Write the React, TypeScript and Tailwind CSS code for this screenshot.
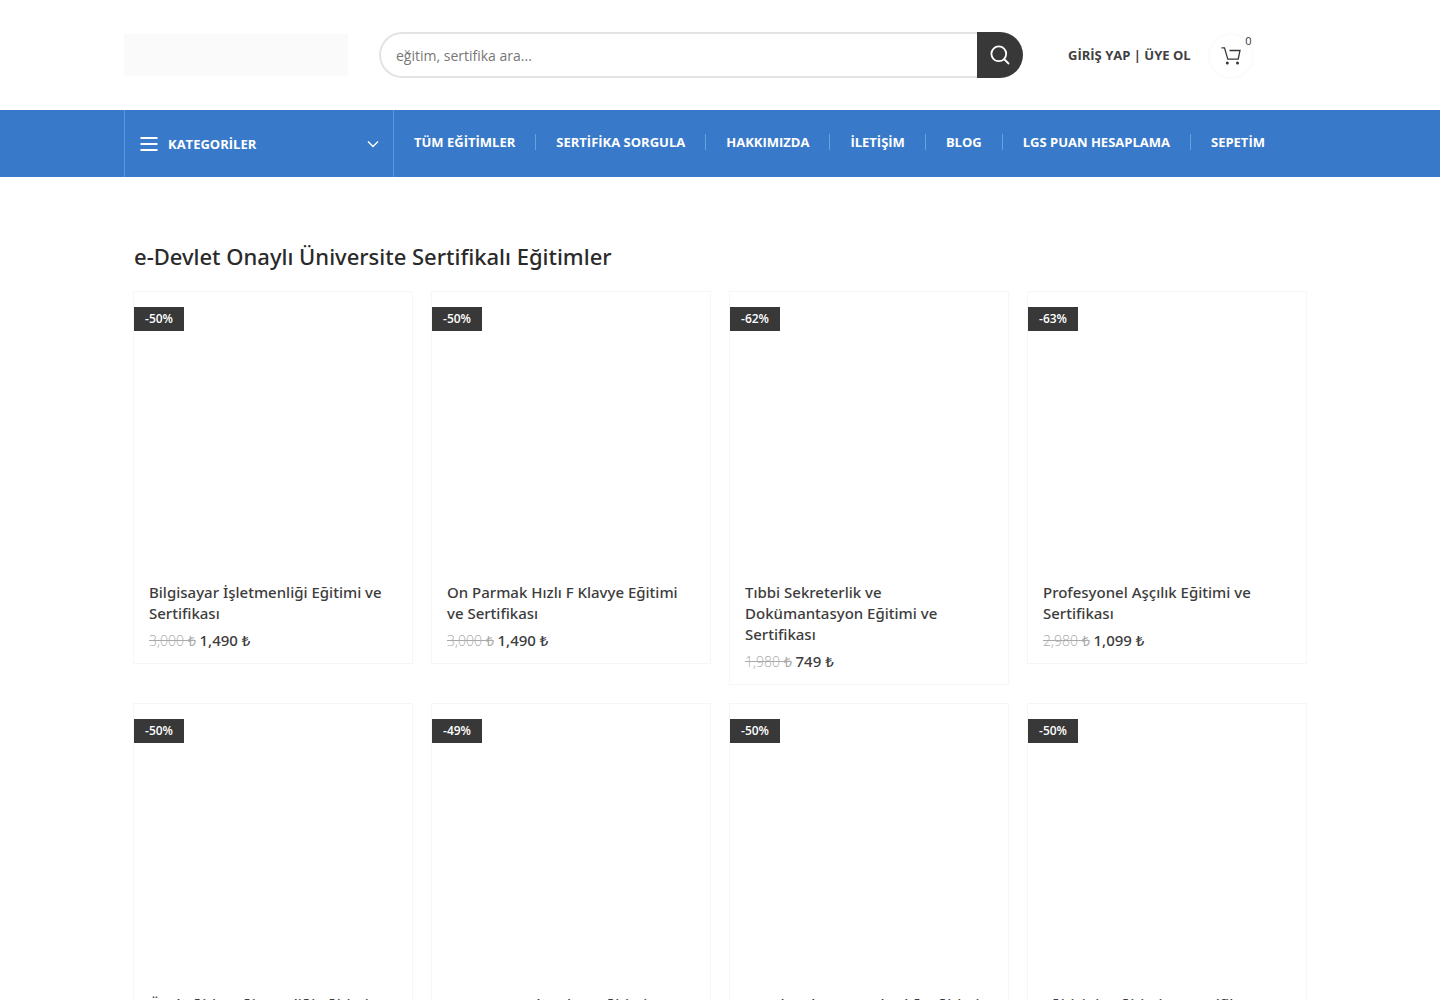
interface Product {
    title: string;
    discount: string;
    oldPrice: string;
    price: string;
}

const navItems = [
    "TÜM EĞİTİMLER",
    "SERTİFİKA SORGULA",
    "HAKKIMIZDA",
    "İLETİŞİM",
    "BLOG",
    "LGS PUAN HESAPLAMA",
    "SEPETİM",
];

const products: Product[] = [
    { title: "Bilgisayar İşletmenliği Eğitimi ve Sertifikası", discount: "-50%", oldPrice: "3,000", price: "1,490" },
    { title: "On Parmak Hızlı F Klavye Eğitimi ve Sertifikası", discount: "-50%", oldPrice: "3,000", price: "1,490" },
    { title: "Tıbbi Sekreterlik ve Dokümantasyon Eğitimi ve Sertifikası", discount: "-62%", oldPrice: "1,980", price: "749" },
    { title: "Profesyonel Aşçılık Eğitimi ve Sertifikası", discount: "-63%", oldPrice: "2,980", price: "1,099" },
    { title: "Özel Eğitim Eğitmenliği Eğitimi ve Sertifikası", discount: "-50%", oldPrice: "3,000", price: "1,490" },
    { title: "Hasta ve Yaşlı Bakım Eğitimi ve Sertifikası", discount: "-49%", oldPrice: "2,950", price: "1,490" },
    { title: "Çocuk Bakım ve Bakıcılığı Eğitimi ve Sertifikası", discount: "-50%", oldPrice: "3,000", price: "1,490" },
    { title: "Eğiticinin Eğitimi ve Sertifikası", discount: "-50%", oldPrice: "3,000", price: "1,490" },
];

function MenuIcon() {
    return (
        <svg width="18" height="14" viewBox="0 0 18 14" fill="none" stroke="currentColor" strokeWidth="1.8" aria-hidden="true">
            <path d="M.5 1h17M.5 7h17M.5 13h17" />
        </svg>
    );
}

function SearchIcon() {
    return (
        <svg width="20" height="20" viewBox="0 0 20 20" fill="none" stroke="currentColor" strokeWidth="1.8" aria-hidden="true">
            <circle cx="8.8" cy="8.8" r="7.4" />
            <path d="M14 14l5 5" />
        </svg>
    );
}

function CartIcon() {
    return (
        <svg width="20" height="20" viewBox="0 0 20 20" fill="none" stroke="currentColor" strokeWidth="1.3" aria-hidden="true">
            <path d="M.5 1.8h3l3.3 11.4h10.4L19 4.5H8.5" />
            <circle cx="6.3" cy="17" r="1.5" fill="currentColor" stroke="none" />
            <circle cx="16.5" cy="17" r="1.5" fill="currentColor" stroke="none" />
        </svg>
    );
}

function Header() {
    return (
        <header>
            <div className="mx-auto flex h-[110px] max-w-[1192px] items-center">
                <a href="#" aria-label="Ana sayfa" className="h-[42px] w-56 shrink-0 bg-[#fafafa]" />
                <form className="ml-[31px] flex h-[46px] max-w-[644px] flex-1" onSubmit={(e) => e.preventDefault()}>
                    <input
                        type="search"
                        aria-label="Ara"
                        placeholder="eğitim, sertifika ara..."
                        className="min-w-0 flex-1 rounded-l-full border-2 border-r-0 border-[#e3e3e3] pl-[15px] pt-0.5 text-sm text-[#777] outline-none placeholder:text-[#777]"
                    />
                    <button type="submit" aria-label="Ara" className="flex w-[46px] items-center justify-center rounded-r-full bg-[#383838] text-white">
                        <SearchIcon />
                    </button>
                </form>
                <a href="#" className="ml-[45px] whitespace-nowrap pt-0.5 text-[13px] font-bold text-[#404040]">
                    GİRİŞ YAP | ÜYE OL
                </a>
                <a href="#" aria-label="Sepet" className="relative ml-[19px] mt-0.5 flex size-[42px] items-center justify-center rounded-full text-[#383838] shadow-[0_0_4px_rgba(0,0,0,0.06)]">
                    <CartIcon />
                    <span className="absolute right-0 top-0 text-[11px] leading-[12px]">0</span>
                </a>
            </div>
            <div className="bg-[#3879c9] text-white">
                <div className="mx-auto flex h-[67px] max-w-[1192px] items-center">
                    <button type="button" className="flex h-full w-[270px] shrink-0 items-center gap-[10px] border-x border-[#5d96dc] pl-[15px] pr-[14px] text-[13px] font-bold">
                        <MenuIcon />
                        <span className="pt-0.5">KATEGORİLER</span>
                        <svg className="ml-auto" width="12" height="14" viewBox="0 0 12 14" fill="none" stroke="currentColor" strokeWidth="1.4" aria-hidden="true">
                            <path d="m1 4.5 5 5 5-5" />
                        </svg>
                    </button>
                    <nav className="flex whitespace-nowrap pb-1 text-[13px] font-bold leading-4">
                        {navItems.map((item) => (
                            <a key={item} href="#" className="border-r border-[#6ba0e0] px-5 last:border-r-0">
                                {item}
                            </a>
                        ))}
                    </nav>
                </div>
            </div>
        </header>
    );
}

function ProductCard({ title, discount, oldPrice, price }: Product) {
    return (
        <article className="pb-3 ring-1 ring-[#f6f6f6]">
            <div className="h-[290px] pt-[15px]">
                <span className="flex h-6 w-[50px] items-center justify-center bg-[#383838] text-xs font-semibold text-white">
                    {discount}
                </span>
            </div>
            <div className="px-[15px]">
                <h3 className="font-['Noto_Sans',sans-serif] text-[15px] font-medium leading-[21px] text-[#3c3c3c]">{title}</h3>
                <p className="mt-[6px] text-[15px] leading-[21px] text-[#3c3c3c]">
                    <del className="text-sm font-light text-[#aaa]">{oldPrice} ₺</del>{" "}
                    <span className="font-['Noto_Sans',sans-serif] font-medium">{price} ₺</span>
                </p>
            </div>
        </article>
    );
}

export default function App() {
    return (
        <div className="bg-white font-['Open_Sans',sans-serif]">
            <Header />
            <main className="mx-auto max-w-[1172px] pb-10 pt-[62px]">
                <h2 className="font-['Noto_Sans',sans-serif] text-[22px] font-medium leading-[34px] text-[#2a2a2a]">
                    e-Devlet Onaylı Üniversite Sertifikalı Eğitimler
                </h2>
                <div className="mt-[19px] grid grid-cols-4 items-start gap-5">
                    {products.map((product) => (
                        <ProductCard key={product.title} {...product} />
                    ))}
                </div>
            </main>
        </div>
    );
}
